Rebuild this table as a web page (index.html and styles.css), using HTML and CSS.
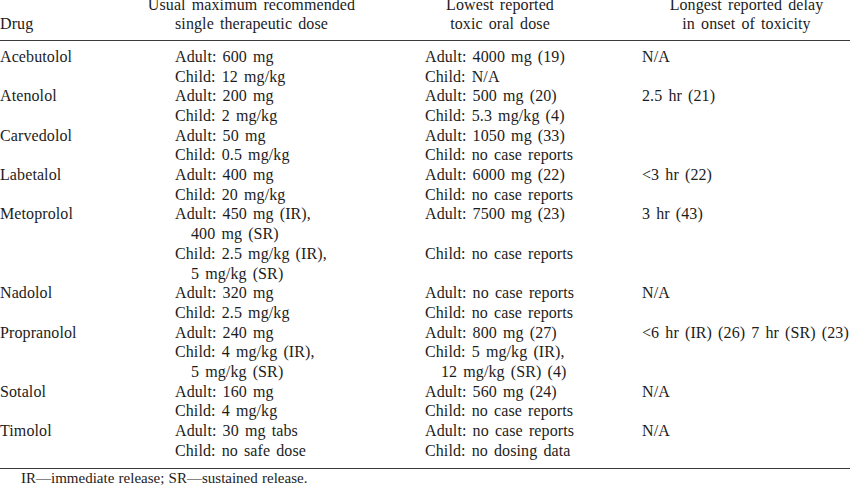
FILE: index.html
```html
<!DOCTYPE html>
<html>
<head>
<meta charset="utf-8">
<link rel="stylesheet" href="styles.css">
</head>
<body>
<div class="page">
  <div class="head">
    <div class="h h-drug">Drug</div>
    <div class="h h-usual">Usual maximum recommended<br>single therapeutic dose</div>
    <div class="h h-low">Lowest reported<br>toxic oral dose</div>
    <div class="h h-delay">Longest reported delay<br>in onset of toxicity</div>
  </div>
  <div class="body">
    <div class="row">
      <div class="c">Acebutolol</div>
      <div class="c"><div>Adult: 600 mg</div><div>Child: 12 mg/kg</div></div>
      <div class="c"><div>Adult: 4000 mg (19)</div><div>Child: N/A</div></div>
      <div class="c">N/A</div>
    </div>
    <div class="row">
      <div class="c">Atenolol</div>
      <div class="c"><div>Adult: 200 mg</div><div>Child: 2 mg/kg</div></div>
      <div class="c"><div>Adult: 500 mg (20)</div><div>Child: 5.3 mg/kg (4)</div></div>
      <div class="c">2.5 hr (21)</div>
    </div>
    <div class="row">
      <div class="c">Carvedolol</div>
      <div class="c"><div>Adult: 50 mg</div><div>Child: 0.5 mg/kg</div></div>
      <div class="c"><div>Adult: 1050 mg (33)</div><div>Child: no case reports</div></div>
      <div class="c"></div>
    </div>
    <div class="row">
      <div class="c">Labetalol</div>
      <div class="c"><div>Adult: 400 mg</div><div>Child: 20 mg/kg</div></div>
      <div class="c"><div>Adult: 6000 mg (22)</div><div>Child: no case reports</div></div>
      <div class="c">&lt;3 hr (22)</div>
    </div>
    <div class="row">
      <div class="c">Metoprolol</div>
      <div class="c"><div>Adult: 450 mg (IR),</div><div class="ind">400 mg (SR)</div><div>Child: 2.5 mg/kg (IR),</div><div class="ind">5 mg/kg (SR)</div></div>
      <div class="c"><div>Adult: 7500 mg (23)</div><div>&nbsp;</div><div>Child: no case reports</div></div>
      <div class="c">3 hr (43)</div>
    </div>
    <div class="row">
      <div class="c">Nadolol</div>
      <div class="c"><div>Adult: 320 mg</div><div>Child: 2.5 mg/kg</div></div>
      <div class="c"><div>Adult: no case reports</div><div>Child: no case reports</div></div>
      <div class="c">N/A</div>
    </div>
    <div class="row">
      <div class="c">Propranolol</div>
      <div class="c"><div>Adult: 240 mg</div><div>Child: 4 mg/kg (IR),</div><div class="ind">5 mg/kg (SR)</div></div>
      <div class="c"><div>Adult: 800 mg (27)</div><div>Child: 5 mg/kg (IR),</div><div class="ind">12 mg/kg (SR) (4)</div></div>
      <div class="c">&lt;6 hr (IR) (26) 7 hr (SR) (23)</div>
    </div>
    <div class="row">
      <div class="c">Sotalol</div>
      <div class="c"><div>Adult: 160 mg</div><div>Child: 4 mg/kg</div></div>
      <div class="c"><div>Adult: 560 mg (24)</div><div>Child: no case reports</div></div>
      <div class="c">N/A</div>
    </div>
    <div class="row">
      <div class="c">Timolol</div>
      <div class="c"><div>Adult: 30 mg tabs</div><div>Child: no safe dose</div></div>
      <div class="c"><div>Adult: no case reports</div><div>Child: no dosing data</div></div>
      <div class="c">N/A</div>
    </div>
  </div>
  <div class="foot">IR—immediate release; SR—sustained release.</div>
</div>
</body>
</html>
```

FILE: styles.css
```css
html, body {
  margin: 0;
  padding: 0;
  background: #ffffff;
}
body {
  font-family: "Liberation Serif", "Times New Roman", serif;
  font-size: 16px;
  line-height: 19.7px;
  color: #1c1c1c;
  word-spacing: 2px;
  letter-spacing: 0.1px;
  width: 850px;
  overflow: hidden;
}
.page {
  margin-top: -5.3px;
}
.head {
  display: flex;
  align-items: flex-end;
  padding-bottom: 6.2px;
  border-bottom: 1.5px solid #3a3a3a;
  white-space: nowrap;
}
.h { text-align: center; }
.h-drug { width: 140px; text-align: left; }
.h-usual { width: 223px; }
.h-low { width: 274px; }
.h-delay { width: 207px; padding-left: 6px; }
.body {
  padding-top: 5.5px;
  padding-bottom: 7.3px;
  border-bottom: 1.5px solid #3a3a3a;
}
.row {
  display: grid;
  grid-template-columns: 175px 250px 217px 1fr;
}
.c { white-space: nowrap; }
.ind { padding-left: 16px; }
.foot {
  padding-left: 21px;
  font-size: 15px;
  word-spacing: 0.5px;
  letter-spacing: 0;
}
```
